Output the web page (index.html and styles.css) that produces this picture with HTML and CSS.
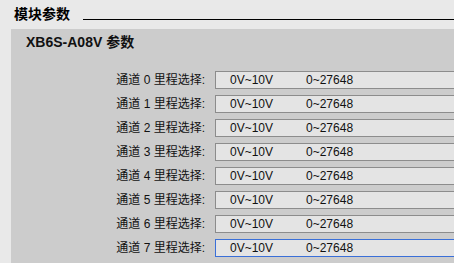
FILE: index.html
```html
<!DOCTYPE html>
<html lang="zh">
<head>
  <meta charset="UTF-8">
  <title>模块参数</title>
  <link rel="stylesheet" href="styles.css">
</head>
<body>
  <div class="section-head">
    <h1>模块参数</h1>
    <div class="rule"></div>
  </div>
  <div class="panel">
    <h2>XB6S-A08V 参数</h2>
    <div class="rows">
      <label>通道 0 里程选择:</label>
      <div class="select"><span class="range">0V~10V</span><span>0~27648</span></div>
      <label>通道 1 里程选择:</label>
      <div class="select"><span class="range">0V~10V</span><span>0~27648</span></div>
      <label>通道 2 里程选择:</label>
      <div class="select"><span class="range">0V~10V</span><span>0~27648</span></div>
      <label>通道 3 里程选择:</label>
      <div class="select"><span class="range">0V~10V</span><span>0~27648</span></div>
      <label>通道 4 里程选择:</label>
      <div class="select"><span class="range">0V~10V</span><span>0~27648</span></div>
      <label>通道 5 里程选择:</label>
      <div class="select"><span class="range">0V~10V</span><span>0~27648</span></div>
      <label>通道 6 里程选择:</label>
      <div class="select"><span class="range">0V~10V</span><span>0~27648</span></div>
      <label>通道 7 里程选择:</label>
      <div class="select active"><span class="range">0V~10V</span><span>0~27648</span></div>
    </div>
  </div>
</body>
</html>
```

FILE: styles.css
```css
html, body {
  height: 100%;
}
body {
  margin: 0;
  background-color: #e9e9e9;
  font-family: "Liberation Sans", "Noto Sans CJK SC", sans-serif;
  font-size: 12px;
  color: #111;
  overflow: hidden;
  display: flex;
  flex-direction: column;
}
.section-head {
  display: flex;
  align-items: flex-start;
  height: 29px;
  padding-left: 14px;
  box-sizing: border-box;
}
.section-head h1 {
  margin: 0;
  font-size: 14px;
  font-weight: bold;
  line-height: 16px;
  padding-top: 6px;
  color: #000;
}
.rule {
  flex: 1;
  height: 19px;
  border-bottom: 1px solid #000;
  margin-left: 13px;
}
.panel {
  flex: 1;
  margin-left: 11px;
  background-color: #cccccc;
  padding-top: 5px;
}
.panel h2 {
  margin: 0 0 0 15px;
  font-size: 14px;
  font-weight: bold;
  line-height: 17px;
  color: #111;
}
.rows {
  display: grid;
  grid-template-columns: 194px 260px;
  column-gap: 10px;
  row-gap: 6px;
  margin-top: 20px;
}
.rows label {
  text-align: right;
  line-height: 18px;
}
.select {
  display: flex;
  height: 18px;
  line-height: 16px;
  box-sizing: border-box;
  border: 1px solid #8c8c8c;
  background-color: #e4e4e4;
  padding-left: 14px;
}
.select.active {
  border-color: #3a6fd8;
}
.range {
  width: 76px;
}
```
